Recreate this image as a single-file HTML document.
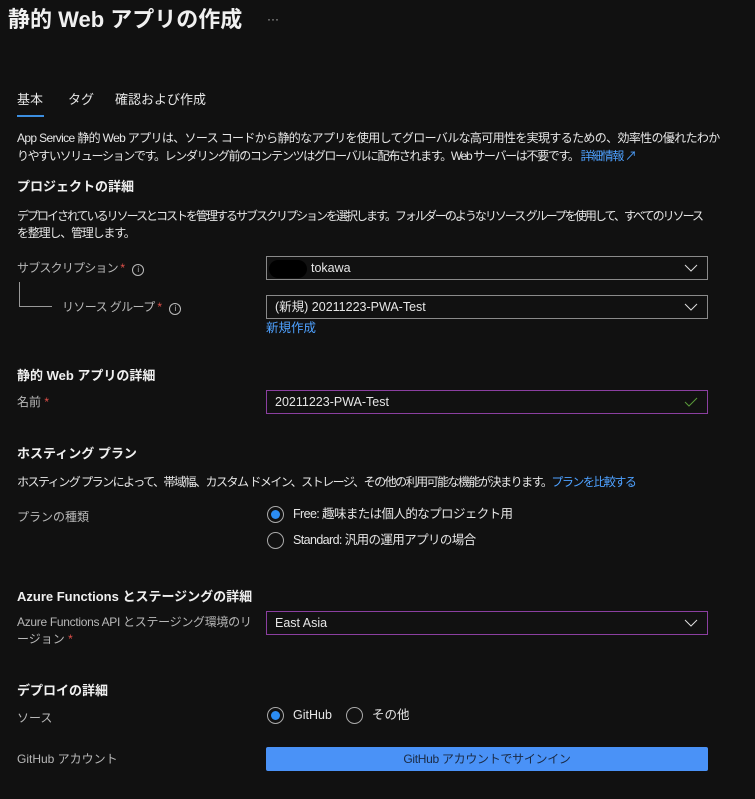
<!DOCTYPE html>
<html><head><meta charset="utf-8"><style>
body{margin:0;width:755px;height:799px;background:#111111;color:#e6e6e6;font-family:"Liberation Sans","Noto Sans CJK JP",sans-serif;font-size:12px;position:relative;overflow:hidden}
.a{position:absolute;white-space:nowrap;line-height:18px}
.p{letter-spacing:-1.2px}
.b{font-weight:bold;color:#f0f0f0;font-size:13px}
.l{color:#b8b8b8}
.st{color:#e0504a}
.lk{color:#4ea1ff}
.box{position:absolute;left:266px;width:440px;height:22px;border:1px solid #8a8a8a;box-sizing:content-box}
.box span{position:absolute;left:8px;top:2px;line-height:18px;font-size:12.5px}
.chev{position:absolute;right:9px;top:7px}
.info{display:inline-block;width:10px;height:10px;border:1px solid #bbb;border-radius:50%;font-size:8px;line-height:10px;text-align:center;vertical-align:0px;margin-left:8px;color:#bbb;letter-spacing:0}
.r{position:absolute;width:17px;height:17px;border:1px solid #aaa;border-radius:50%;box-sizing:border-box}
.r.on::after{content:"";position:absolute;left:3px;top:3px;width:9px;height:9px;border-radius:50%;background:#2b8cf2}
</style></head><body>
<div class="a b" style="left:8px;top:6px;font-size:22px;line-height:28px">静的 Web アプリの作成</div>
<div class="a l" style="left:267px;top:10px">···</div>
<div class="a" style="left:17px;top:91px;font-size:13px">基本</div>
<div class="a" style="left:68px;top:91px;font-size:13px">タグ</div>
<div class="a" style="left:115px;top:91px;font-size:13px">確認および作成</div>
<div style="position:absolute;left:17px;top:115px;width:27px;height:2px;background:#3c8ee0"></div>
<div class="a p" style="left:17px;top:129px;letter-spacing:-0.65px">App Service 静的 Web アプリは、ソース コードから静的なアプリを使用してグローバルな高可用性を実現するための、効率性の優れたわか</div>
<div class="a p" style="left:17px;top:147px;letter-spacing:-1.35px">りやすいソリューションです。レンダリング前のコンテンツはグローバルに配布されます。Web サーバーは不要です。 <span class="lk">詳細情報 ↗</span></div>
<div class="a b" style="left:17px;top:178px">プロジェクトの詳細</div>
<div class="a p" style="left:17px;top:207px;letter-spacing:-2.0px">デプロイされているリソースとコストを管理するサブスクリプションを選択します。フォルダーのようなリソース グループを使用して、すべてのリソース</div>
<div class="a p" style="left:17px;top:224px">を整理し、管理します。</div>
<div class="a l" style="left:17px;top:259px;letter-spacing:-0.8px">サブスクリプション <span class="st">*</span><span class="info">i</span></div>
<div style="position:absolute;left:19px;top:282px;width:32px;height:24px;border-left:1px solid #999;border-bottom:1px solid #999"></div>
<div class="a l" style="left:62px;top:298px;letter-spacing:-0.6px">リソース グループ <span class="st">*</span><span class="info">i</span></div>
<div class="box" style="top:256px"><div style="position:absolute;left:2px;top:3px;width:38px;height:18px;border-radius:9px;background:#000"></div><span style="left:44px">tokawa</span><svg class="chev" width="14" height="8"><path d="M1 1 L7 7 L13 1" stroke="#ddd" fill="none"/></svg></div>
<div class="box" style="top:295px"><span>(新規) 20211223-PWA-Test</span><svg class="chev" width="14" height="8"><path d="M1 1 L7 7 L13 1" stroke="#ddd" fill="none"/></svg></div>
<div class="a lk" style="left:266px;top:319px;font-size:12.5px">新規作成</div>
<div class="a b" style="left:17px;top:367px">静的 Web アプリの詳細</div>
<div class="a l" style="left:17px;top:393px">名前 <span class="st">*</span></div>
<div class="box" style="top:390px;border-color:#8b3fa0"><span>20211223-PWA-Test</span><svg class="chev" width="14" height="10" style="top:6px"><path d="M1 5 L5 9 L13 1" stroke="#5a9a3a" fill="none"/></svg></div>
<div class="a b" style="left:17px;top:445px">ホスティング プラン</div>
<div class="a p" style="left:17px;top:473px;letter-spacing:-1.5px">ホスティング プランによって、帯域幅、カスタム ドメイン、ストレージ、その他の利用可能な機能が決まります。<span class="lk">プランを比較する</span></div>
<div class="a l" style="left:17px;top:508px">プランの種類</div>
<div class="r on" style="left:267px;top:506px"></div><div class="a" style="left:293px;top:505px;font-size:12.5px;letter-spacing:-0.6px">Free: 趣味または個人的なプロジェクト用</div>
<div class="r" style="left:267px;top:532px"></div><div class="a" style="left:293px;top:531px;font-size:12.5px;letter-spacing:-0.6px">Standard: 汎用の運用アプリの場合</div>
<div class="a b" style="left:17px;top:588px">Azure Functions とステージングの詳細</div>
<div class="a l" style="left:17px;top:613px;letter-spacing:-0.3px">Azure Functions API とステージング環境のリ</div>
<div class="a l" style="left:17px;top:630px">ージョン <span class="st">*</span></div>
<div class="box" style="top:611px;border-color:#8b3fa0"><span>East Asia</span><svg class="chev" width="14" height="8"><path d="M1 1 L7 7 L13 1" stroke="#ddd" fill="none"/></svg></div>
<div class="a b" style="left:17px;top:682px">デプロイの詳細</div>
<div class="a l" style="left:17px;top:709px">ソース</div>
<div class="r on" style="left:267px;top:707px"></div><div class="a" style="left:293px;top:706px;font-size:12.5px">GitHub</div>
<div class="r" style="left:346px;top:707px"></div><div class="a" style="left:372px;top:706px;font-size:12.5px">その他</div>
<div class="a l" style="left:17px;top:750px">GitHub アカウント</div>
<div style="position:absolute;left:266px;top:747px;width:442px;height:24px;background:#4a92f7;border-radius:2px;color:#1a2a44;text-align:center;line-height:24px;letter-spacing:-0.3px">GitHub アカウントでサインイン</div>
</body></html>
